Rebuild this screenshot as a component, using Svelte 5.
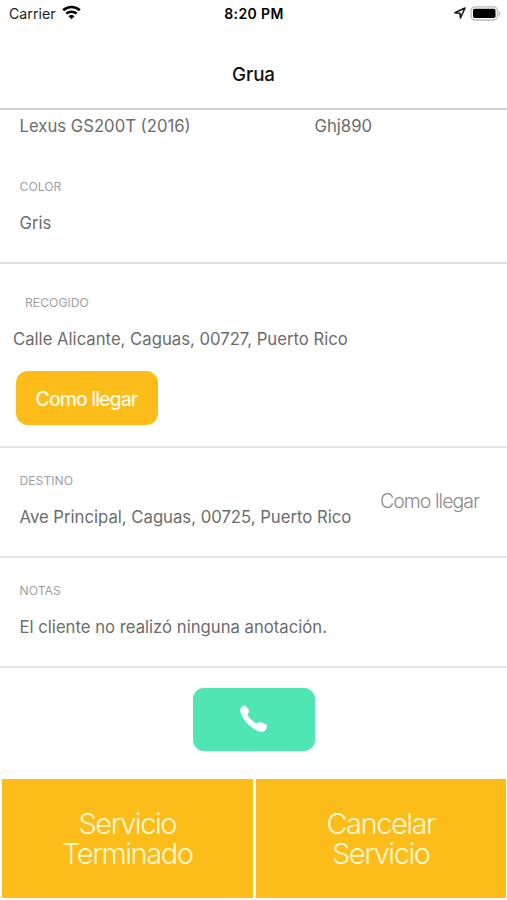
<script>
  const actions = [
    ['Servicio', 'Terminado'],
    ['Cancelar', 'Servicio']
  ];
</script>

<div class="screen">
  <div class="status">
    <div class="carrier">
      <span>Carrier</span>
      <svg width="19" height="15" viewBox="0 0 19 15">
        <path d="M1.2 5.3C5.8.9 13.200.9 17.800 5.300" fill="none" stroke="#000" stroke-width="2.700" />
        <path d="M4.300 8.700C7.200 6 11.800 6 14.700 8.700" fill="none" stroke="#000" stroke-width="2.500" />
        <path d="M6.500 11.200C8.100 9.600 10.900 9.600 12.500 11.200L9.500 14.200Z" />
      </svg>
    </div>
    <span class="time">8:20 PM</span>
    <div class="indicators">
      <svg width="12" height="12" viewBox="0 0 12 12">
        <path d="M.8 5.800L11 1L6.500 11L5.900 6.200Z" fill="none" stroke="#111" stroke-width="1.500" stroke-linejoin="round" />
      </svg>
      <svg width="31" height="15" viewBox="0 0 31 15">
        <rect x="1" y=".8" width="26.500" height="13.200" rx="4" fill="#fff" stroke="#bcbcbc" stroke-width="1.300" />
        <rect x="3" y="2.800" width="22.500" height="9.200" rx="1.800" />
        <path d="M28.800 5v5c1.900-.7 1.900-4.300 0-5Z" fill="#b5b5b5" />
      </svg>
    </div>
  </div>
  <header><h1>Grua</h1></header>

  <section class="vehicle">
    <div class="columns">
      <p class="value model">Lexus GS200T (2016)</p>
      <p class="value plate">Ghj890</p>
    </div>
    <h2>COLOR</h2>
    <p class="value">Gris</p>
  </section>

  <section class="pickup">
    <h2>RECOGIDO</h2>
    <p class="value">Calle Alicante, Caguas, 00727, Puerto Rico</p>
    <button class="directions"><span>Como llegar</span></button>
  </section>

  <section class="destination">
    <div>
      <h2>DESTINO</h2>
      <p class="value">Ave Principal, Caguas, 00725, Puerto Rico</p>
    </div>
    <button class="link">Como llegar</button>
  </section>

  <section class="notes">
    <h2>NOTAS</h2>
    <p class="value">El cliente no realizó ninguna anotación.</p>
  </section>

  <div class="contact">
    <button class="call" aria-label="Llamar">
      <svg width="30" height="30" viewBox="0 0 30 30">
        <path d="M3.200 2.600C4.300 1.400 5.900 1 7.100 2.200L10 6.200C10.700 7.300 10 8.500 8.600 9.900C8.300 12.300 14.500 18.700 17.400 19.100C18.900 18.800 20.300 17.800 21.600 18.100L26.800 20.400C28.500 21.200 28.200 22.600 27.300 24.500C26.300 27 25 28 22.400 27.700C12.500 26 2.400 15.500 1.200 6.600C1 4.900 2.100 3.700 3.200 2.600Z" fill="#fff" />
      </svg>
    </button>
  </div>

  <footer>
    {#each actions as [first, second]}
      <button class="action"><span>{first}</span><span>{second}</span></button>
    {/each}
  </footer>
</div>

<style>
  :global(body) { margin: 0; background: #fff; }
  .screen {
    box-sizing: border-box;
    width: 507px;
    height: 900px;
    display: flex;
    flex-direction: column;
    overflow: hidden;
    background: #fff;
    font-family: Inter, "Liberation Sans", sans-serif;
    color: #6c6c6c;
  }
  h1, h2, p { margin: 0; white-space: nowrap; }
  button { border: 0; padding: 0; margin: 0; font-family: inherit; display: flex; align-items: center; justify-content: center; white-space: nowrap; }
  .status {
    box-sizing: border-box;
    height: 28px;
    display: grid;
    grid-template-columns: 1fr auto 1fr;
    align-items: center;
    padding: 0 6px 2px 9px;
    color: #000;
    flex: none;
  }
  .carrier { display: flex; align-items: center; gap: 6px; font-size: 14.200px; color: #222; }
  .carrier svg { margin-top: -2px; }
  .time { font-size: 14px; font-weight: 600; letter-spacing: .4px; padding-right: 2px; }
  .indicators { display: flex; align-items: center; justify-content: flex-end; gap: 4px; }
  header {
    box-sizing: border-box;
    height: 82px;
    flex: none;
    display: flex;
    justify-content: center;
    padding-top: 35px;
    border-bottom: 2px solid #cfcfcf;
  }
  h1 { font-size: 18.800px; font-weight: 500; line-height: 24px; letter-spacing: -.1px; color: #111; }
  h2 { font-size: 12.200px; font-weight: 400; line-height: 16px; color: #a0a0a0; }
  .value { font-size: 16.700px; line-height: 22px; }
  section { box-sizing: border-box; flex: none; border-bottom: 2px solid #e6e6e6; padding-left: 19.500px; }
  h2 + .value { margin-top: 17px; }
  .vehicle { height: 154px; padding-top: 5px; border-color: #dedede; }
  .columns { display: flex; }
  .model { width: 295px; }
  .vehicle h2 { margin-top: 42px; }
  .pickup { height: 184px; padding: 31px 0 0 13px; }
  .pickup h2 { padding-left: 12px; }
  .directions {
    width: 142px;
    height: 54px;
    margin: 21px 0 0 2.500px;
    border-radius: 12px;
    background: #fcbc19;
    color: #fffbe8;
    font-size: 19.500px;
    font-weight: 500;
    letter-spacing: -.95px;
  }
  .directions span { padding-top: 2px; }
  .destination { height: 110px; padding-top: 25px; display: flex; }
  .destination > div { width: 360.500px; }
  .link { height: 24px; margin-top: 16px; background: none; color: #8c8c8c; font-size: 19.500px; font-weight: 300; letter-spacing: -.97px; }
  .notes { height: 110px; padding-top: 25px; }
  .contact { height: 111px; flex: none; display: flex; justify-content: center; padding-top: 20px; box-sizing: border-box; }
  .call { width: 122px; height: 63px; border-radius: 11px; background: #4fe6b3; }
  .call svg { margin-top: -2px; }
  footer { display: flex; gap: 3px; padding: 0 1px 0 2px; }
  .action {
    flex: 1;
    height: 119px;
    flex-direction: column;
    background: #fcbc19;
    color: #fff8d8;
    font-size: 29px;
    font-weight: 300;
    line-height: 30px;
    letter-spacing: -1.450px;
  }
</style>
